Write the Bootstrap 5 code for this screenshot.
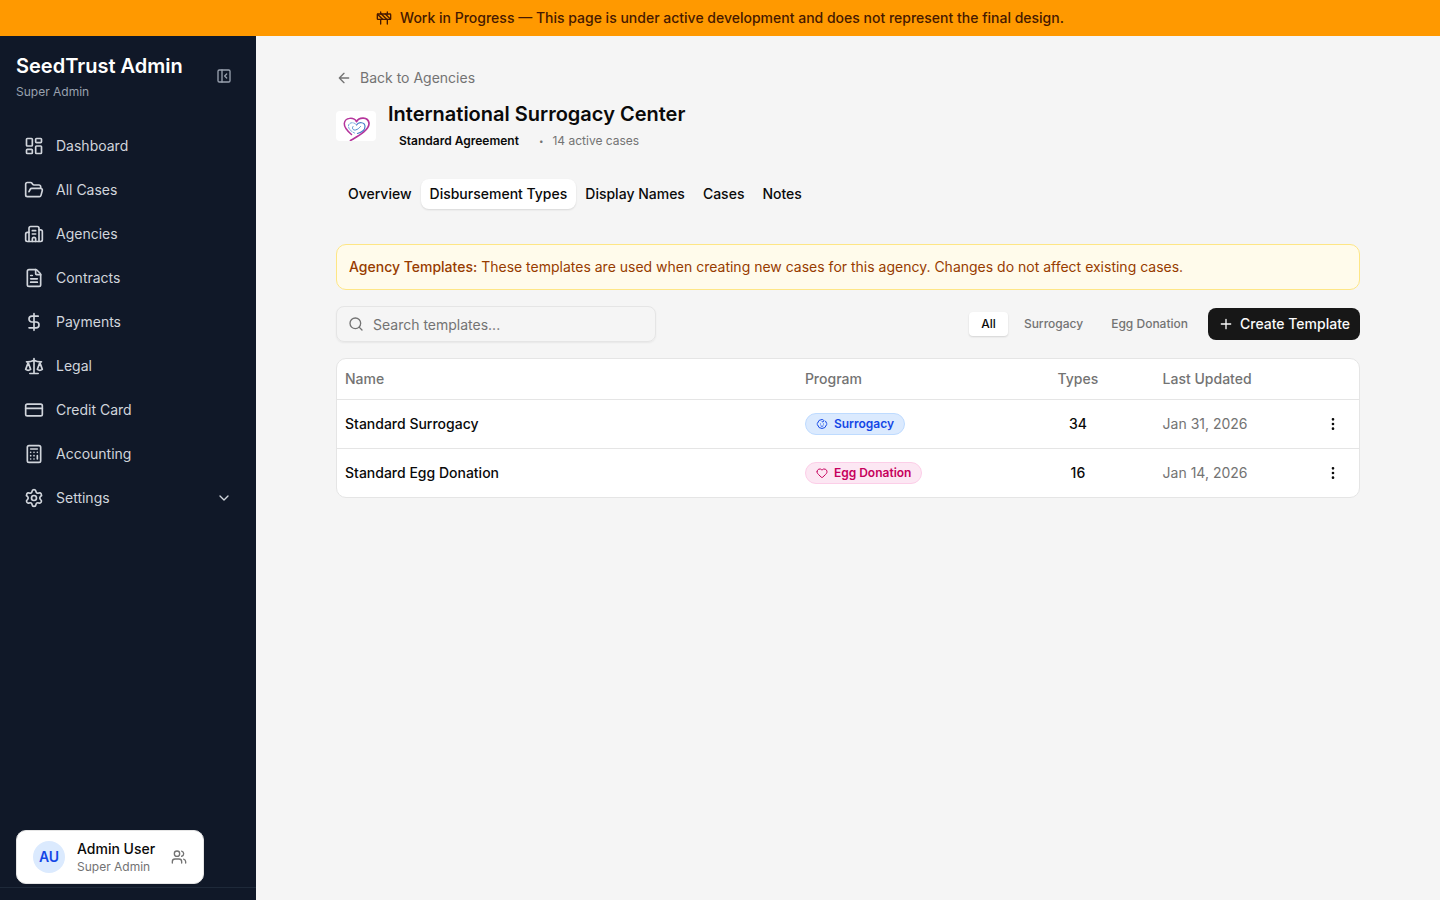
<!DOCTYPE html>
<html lang="en">
<head>
<meta charset="utf-8">
<meta name="viewport" content="width=device-width, initial-scale=1">
<title>International Surrogacy Center – SeedTrust Admin</title>
<link href="https://cdn.jsdelivr.net/npm/bootstrap@5.3.0/dist/css/bootstrap.min.css" rel="stylesheet">
<style>
  :root { --ink: #0a0a0a; --soft: #737373; --line: #e5e5e5; --night: #101828; }
  body { font-family: Inter, "Liberation Sans", sans-serif; font-size: 14px; line-height: 20px; color: var(--ink); background: #f5f5f5; }
  .ico { fill: none; stroke: currentColor; stroke-width: 2; stroke-linecap: round; stroke-linejoin: round; width: 16px; height: 16px; flex: none; }
  .ico-lg { width: 20px; height: 20px; }
  .ico-sm { width: 12px; height: 12px; }
  .fs-xs { font-size: 12px; line-height: 16px; }
  .title-lg { font-size: 20px; line-height: 28px; margin: 0; font-weight: 600; }
  .text-soft { color: var(--soft); }
  .strong-md { font-weight: 500; }
  .wip { background: #ff9900; color: #461901; }
  .side { width: 256px; background: var(--night); color: #d1d5dc; }
  .side-title { color: #fff; }
  .side-sub { color: #99a1af; }
  .side-toggle { --bs-btn-color: #99a1af; }
  .side-nav { padding: 10px 16px 0; }
  .side .nav-link { color: #d1d5dc; padding: 10px 8px; gap: 12px; }
  .side-foot { border-top: 1px solid #1e2939; height: 13px; }
  .user-card { left: 16px; bottom: 16px; background: #fff; border: 1px solid var(--line); border-radius: 10px; padding: 8px 16px; gap: 12px; color: var(--ink); line-height: 20px; }
  .avatar { width: 32px; height: 32px; background: #dbeafe; color: #1447e6; }
  .page { max-width: 1024px; }
  .back { color: var(--soft); }
  .agency { margin-top: 12px; gap: 12px; }
  .agency-meta { margin-top: 2px; gap: 8px; }
  .agreement { font-weight: 600; color: var(--ink); padding: 3px 11px; }
  .bullet { font-size: 8px; padding: 0 1px; }
  .logo-box { width: 40px; height: 30px; border-radius: 4px; }
  .tabs { margin: 24px 0 32px; padding: 3px; }
  .tabs .nav-link { color: var(--ink); font-weight: 500; padding: 4px 8px; border: 1px solid transparent; border-radius: 8px; }
  .tabs .nav-link.active { background: #fff; color: var(--ink); box-shadow: 0 1px 2px rgba(0,0,0,.12); }
  .note { background: #fffbeb; border: 1px solid #fee685; color: #973c00; border-radius: 10px; padding: 12px; }
  .search { width: 320px; }
  .search .form-control { font-size: 14px; line-height: 20px; height: 36px; padding: 7px 12px 7px 36px; background: transparent; border-color: var(--line); border-radius: 8px; box-shadow: 0 1px 2px rgba(0,0,0,.06); }
  .search .form-control::placeholder { color: var(--soft); }
  .search .ico { left: 12px; top: 10px; color: var(--soft); }
  .seg .btn { font-size: 12px; line-height: 16px; font-weight: 500; padding: 4px 12px; border: 0; border-radius: 4px; color: var(--soft); }
  .seg .btn.active { background: #fff; color: var(--ink); box-shadow: 0 1px 2px rgba(0,0,0,.14); }
  .btn-create { background: #171717; color: #fafafa; font-size: 14px; line-height: 20px; font-weight: 500; padding: 6px 10px; border: 0; border-radius: 8px; gap: 6px; }
  .btn-create:hover { background: #303030; color: #fff; }
  .panel { border: 1px solid var(--line); border-radius: 10px; background: #fff; overflow: hidden; }
  .grid-table { table-layout: fixed; margin: 0; color: var(--ink); --bs-table-color: var(--ink); }
  .grid-table > :not(caption) > * > * { padding: 10px 8px; border-color: var(--line); background: transparent; vertical-align: middle; }
  .grid-table th { font-weight: 500; color: var(--soft); }
  .grid-table tbody td { height: 49px; padding-top: 8px; padding-bottom: 8px; }
  .grid-table tbody tr:last-child td { border-bottom: 0; height: 48px; }
  .grid-table .text-soft { color: var(--soft); }
  .pill { display: inline-flex; align-items: center; gap: 6px; font-size: 12px; line-height: 16px; font-weight: 600; padding: 2px 10px; border: 1px solid; border-radius: 11px; vertical-align: middle; }
  .pill-blue { background: #dbeafe; border-color: #bedbff; color: #1447e6; }
  .pill-pink { background: #fce7f3; border-color: #fccee8; color: #c6005c; }
  .btn-dots { border: 0; padding: 8px; line-height: 16px; color: var(--ink); }
</style>
</head>
<body class="d-flex flex-column min-vh-100">
<div class="wip strong-md d-flex justify-content-center align-items-center gap-2 p-2">
  <svg class="ico" viewBox="0 0 24 24"><rect x="2" y="6" width="20" height="8" rx="1"/><path d="M17 14v7M7 14v7M17 3v3M7 3v3M10 14 2.3 6.3M14 6l7.7 7.7M8 6l8 8"/></svg>
  <span>Work in Progress — This page is under active development and does not represent the final design.</span>
</div>
<div class="d-flex flex-grow-1">
  <aside class="side position-relative d-flex flex-column flex-shrink-0">
    <div class="d-flex justify-content-between align-items-center p-3">
      <div>
        <h2 class="title-lg side-title">SeedTrust Admin</h2>
        <div class="fs-xs side-sub mt-1">Super Admin</div>
      </div>
      <button class="btn side-toggle border-0 p-2 d-flex" aria-label="Collapse sidebar"><svg class="ico" viewBox="0 0 24 24"><rect width="18" height="18" x="3" y="3" rx="2"/><path d="M9 3v18M16 15l-3-3 3-3"/></svg></button>
    </div>
    <nav class="side-nav nav flex-column flex-nowrap gap-1 flex-grow-1">
      <a class="nav-link d-flex" href="#"><svg class="ico ico-lg" viewBox="0 0 24 24"><rect width="7" height="9" x="3" y="3" rx="1"/><rect width="7" height="5" x="14" y="3" rx="1"/><rect width="7" height="9" x="14" y="12" rx="1"/><rect width="7" height="5" x="3" y="16" rx="1"/></svg>Dashboard</a>
      <a class="nav-link d-flex" href="#"><svg class="ico ico-lg" viewBox="0 0 24 24"><path d="m6 14 1.5-2.9A2 2 0 0 1 9.24 10H20a2 2 0 0 1 1.94 2.5l-1.54 6a2 2 0 0 1-1.95 1.5H4a2 2 0 0 1-2-2V5a2 2 0 0 1 2-2h3.9a2 2 0 0 1 1.69.9l.81 1.2a2 2 0 0 0 1.67.9H18a2 2 0 0 1 2 2v2"/></svg>All Cases</a>
      <a class="nav-link d-flex" href="#"><svg class="ico ico-lg" viewBox="0 0 24 24"><path d="M10 12h4M10 8h4M14 21v-3a2 2 0 0 0-4 0v3"/><path d="M6 10H4a2 2 0 0 0-2 2v7a2 2 0 0 0 2 2h16a2 2 0 0 0 2-2V9a2 2 0 0 0-2-2h-2"/><path d="M6 21V5a2 2 0 0 1 2-2h8a2 2 0 0 1 2 2v16"/></svg>Agencies</a>
      <a class="nav-link d-flex" href="#"><svg class="ico ico-lg" viewBox="0 0 24 24"><path d="M6 22a2 2 0 0 1-2-2V4a2 2 0 0 1 2-2h8a2.4 2.4 0 0 1 1.704.706l3.588 3.588A2.4 2.4 0 0 1 20 8v12a2 2 0 0 1-2 2z"/><path d="M14 2v5a1 1 0 0 0 1 1h5M10 9H8M16 13H8M16 17H8"/></svg>Contracts</a>
      <a class="nav-link d-flex" href="#"><svg class="ico ico-lg" viewBox="0 0 24 24"><path d="M12 2v20M17 5H9.500a3.500 3.500 0 0 0 0 7h5a3.500 3.500 0 0 1 0 7H6"/></svg>Payments</a>
      <a class="nav-link d-flex" href="#"><svg class="ico ico-lg" viewBox="0 0 24 24"><path d="M12 3v18M19 8l3 8a5 5 0 0 1-6 0zV7M3 7h1a17 17 0 0 0 8-2 17 17 0 0 0 8 2h1M5 8l3 8a5 5 0 0 1-6 0zV7M7 21h10"/></svg>Legal</a>
      <a class="nav-link d-flex" href="#"><svg class="ico ico-lg" viewBox="0 0 24 24"><rect width="20" height="14" x="2" y="5" rx="2"/><path d="M2 10h20"/></svg>Credit Card</a>
      <a class="nav-link d-flex" href="#"><svg class="ico ico-lg" viewBox="0 0 24 24"><rect width="16" height="20" x="4" y="2" rx="2"/><path d="M8 6h8M16 14v4M16 10h.01M12 10h.01M8 10h.01M12 14h.01M8 14h.01M12 18h.01M8 18h.01"/></svg>Accounting</a>
      <a class="nav-link d-flex align-items-center" href="#"><svg class="ico ico-lg" viewBox="0 0 24 24"><path d="M9.671 4.136a2.34 2.34 0 0 1 4.659 0 2.34 2.34 0 0 0 3.319 1.915 2.34 2.34 0 0 1 2.33 4.033 2.34 2.34 0 0 0 0 3.831 2.34 2.34 0 0 1-2.33 4.033 2.34 2.34 0 0 0-3.319 1.915 2.34 2.34 0 0 1-4.659 0 2.34 2.34 0 0 0-3.32-1.915 2.34 2.34 0 0 1-2.33-4.033 2.34 2.34 0 0 0 0-3.831A2.34 2.34 0 0 1 6.35 6.051a2.34 2.34 0 0 0 3.319-1.915"/><circle cx="12" cy="12" r="3"/></svg>Settings<svg class="ico ms-auto" viewBox="0 0 24 24"><path d="m6 9 6 6 6-6"/></svg></a>
    </nav>
    <div class="side-foot"></div>
    <button class="user-card position-absolute d-flex align-items-center text-start">
      <span class="avatar rounded-circle d-flex align-items-center justify-content-center fw-semibold">AU</span>
      <span class="d-flex flex-column"><span class="strong-md">Admin User</span><span class="fs-xs text-soft">Super Admin</span></span>
      <svg class="ico text-soft ms-1" viewBox="0 0 24 24"><path d="M16 21v-2a4 4 0 0 0-4-4H6a4 4 0 0 0-4 4v2"/><circle cx="9" cy="7" r="4"/><path d="M22 21v-2a4 4 0 0 0-3-3.870M16 3.130a4 4 0 0 1 0 7.750"/></svg>
    </button>
  </aside>
  <main class="flex-grow-1 p-4">
    <div class="page mx-auto pt-2">
      <a class="back d-flex align-items-center gap-2 text-decoration-none" href="#"><svg class="ico" viewBox="0 0 24 24"><path d="m12 19-7-7 7-7M19 12H5"/></svg>Back to Agencies</a>
      <header class="agency d-flex align-items-center">
        <div class="logo-box bg-white overflow-hidden">
          <svg class="d-block" width="40" height="30" viewBox="0 0 40 30" fill="none" stroke-linecap="round">
            <path d="M20.500 10.500C18 6 9 6 8.300 12.500 8 17 12 20.500 15.500 23.500" stroke="#b5359c" stroke-width="1.500"/>
            <path d="M20.500 10.500C23 6 32 5.500 33 12c.5 7-11 13-18.500 17.500" stroke="#b5359c" stroke-width="1.700"/>
            <path d="M20.500 14c2-3.500 8.500-3 8.500 1.500 0 3.500-4 6-7.500 7" stroke="#4a7cc9" stroke-width="1.200"/>
            <path d="M19.500 13c-3-2.500-7.500-1-7 2.500.3 3 3 5 6 6.500" stroke="#6aa2dc" stroke-dasharray="2 1.500"/>
            <path d="M17 15.500c-1.500 1.500 0 4 2.500 3.500s4-2.500 5-3.500" stroke="#4a8bd0"/>
          </svg>
        </div>
        <div>
          <h1 class="title-lg">International Surrogacy Center</h1>
          <div class="agency-meta d-flex align-items-center fs-xs text-soft">
            <span class="agreement">Standard Agreement</span><span class="bullet">•</span><span>14 active cases</span>
          </div>
        </div>
      </header>
      <nav class="tabs nav">
        <a class="nav-link" href="#">Overview</a>
        <a class="nav-link active" href="#" aria-current="page">Disbursement Types</a>
        <a class="nav-link" href="#">Display Names</a>
        <a class="nav-link" href="#">Cases</a>
        <a class="nav-link" href="#">Notes</a>
      </nav>
      <div class="note"><strong class="strong-md">Agency Templates:</strong> These templates are used when creating new cases for this agency. Changes do not affect existing cases.</div>
      <div class="d-flex align-items-center justify-content-between my-3">
        <div class="search position-relative">
          <svg class="ico position-absolute" viewBox="0 0 24 24"><circle cx="11" cy="11" r="8"/><path d="m21 21-4.340-4.340"/></svg>
          <input class="form-control" type="search" placeholder="Search templates..." aria-label="Search templates">
        </div>
        <div class="d-flex align-items-center">
          <div class="seg d-flex gap-1 me-2">
            <button class="btn active">All</button><button class="btn">Surrogacy</button><button class="btn">Egg Donation</button>
          </div>
          <button class="btn btn-create d-flex align-items-center"><svg class="ico" viewBox="0 0 24 24"><path d="M5 12h14M12 5v14"/></svg>Create Template</button>
        </div>
      </div>
      <div class="panel">
        <table class="table grid-table">
          <colgroup><col style="width:45%"><col style="width:20%"><col style="width:15%"><col style="width:15%"><col style="width:5%"></colgroup>
          <thead><tr><th>Name</th><th>Program</th><th class="text-center">Types</th><th>Last Updated</th><th></th></tr></thead>
          <tbody>
            <tr><td class="strong-md">Standard Surrogacy</td><td><span class="pill pill-blue"><svg class="ico ico-sm" viewBox="0 0 24 24"><path d="M9 12h.01M15 12h.01M10 16c.5.3 1.200.5 2 .5s1.500-.2 2-.5"/><path d="M19 6.300a9 9 0 0 1 1.800 3.900 2 2 0 0 1 0 3.600 9 9 0 0 1-17.600 0 2 2 0 0 1 0-3.600A9 9 0 0 1 12 3c2 0 3.500 1.100 3.500 2.500s-.9 2.500-2 2.500c-.8 0-1.500-.4-1.500-1"/></svg>Surrogacy</span></td><td class="text-center strong-md">34</td><td class="text-soft">Jan 31, 2026</td><td class="text-center"><button class="btn btn-dots d-inline-flex" aria-label="Actions"><svg class="ico" viewBox="0 0 24 24"><circle cx="12" cy="12" r="1"/><circle cx="12" cy="5" r="1"/><circle cx="12" cy="19" r="1"/></svg></button></td></tr>
            <tr><td class="strong-md">Standard Egg Donation</td><td><span class="pill pill-pink"><svg class="ico ico-sm" viewBox="0 0 24 24"><path d="M2 9.500a5.500 5.500 0 0 1 9.591-3.676.56.56 0 0 0 .818 0A5.490 5.490 0 0 1 22 9.500c0 2.290-1.500 4-3 5.500l-5.492 5.313a2 2 0 0 1-3 .019L5 15c-1.500-1.500-3-3.200-3-5.500"/></svg>Egg Donation</span></td><td class="text-center strong-md">16</td><td class="text-soft">Jan 14, 2026</td><td class="text-center"><button class="btn btn-dots d-inline-flex" aria-label="Actions"><svg class="ico" viewBox="0 0 24 24"><circle cx="12" cy="12" r="1"/><circle cx="12" cy="5" r="1"/><circle cx="12" cy="19" r="1"/></svg></button></td></tr>
          </tbody>
        </table>
      </div>
    </div>
  </main>
</div>
<script src="https://cdn.jsdelivr.net/npm/bootstrap@5.3.0/dist/js/bootstrap.bundle.min.js"></script>
</body>
</html>
